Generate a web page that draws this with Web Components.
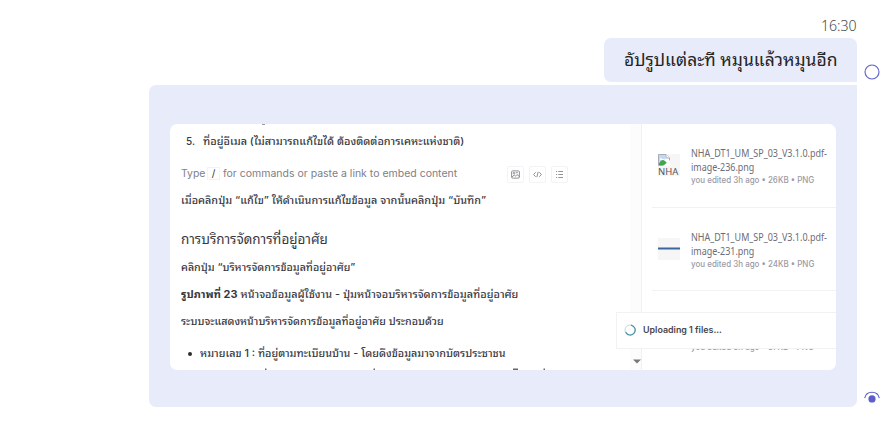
<!DOCTYPE html>
<html lang="th"><head><meta charset="utf-8"><title>Chat</title>
<style>
html,body{margin:0;width:893px;height:433px;overflow:hidden;background:#fff;font-family:"Noto Sans","Noto Sans Thai Looped",Loma,Waree,"Noto Sans Thai","Liberation Sans",sans-serif}
</style></head><body>
<chat-thread></chat-thread>
<script>
const define=(name,html,init)=>customElements.define(name,class extends HTMLElement{
  connectedCallback(){
    if(!this.shadowRoot)this.attachShadow({mode:"open"}).innerHTML=html;
    if(init)init(this,this.shadowRoot);
  }
});

/* One line of text, stretched horizontally to the width given in its w attribute. */
define("fit-line",`<style>
:host{display:block;height:20px;line-height:20px;white-space:nowrap;flex:none}
span{display:inline-block;transform-origin:0 50%;white-space:nowrap}
</style><span><slot></slot></span>`,(el,root)=>{
  const w=+el.getAttribute("w"),s=root.querySelector("span");
  el.style.width=w+"px";
  requestAnimationFrame(()=>{const n=s.offsetWidth;if(n)s.style.transform="scaleX("+w/n+")"});
});

define("tool-button",`<style>
:host{display:flex;box-sizing:border-box;width:17px;height:17px;border:1px solid #f3f3f5;border-radius:2px;align-items:center;justify-content:center;color:#85858b}
</style><slot></slot>`);

define("file-item",`<style>
:host{display:flex;box-sizing:border-box;height:83px;margin-left:10px;padding:19px 0 0 6px;border-bottom:1px solid #f2f2f5}
.thumb{width:22px;height:22px;margin-top:11px;background:#f6f6f7;flex:none;overflow:hidden}
.meta{margin-left:11px;display:flex;flex-direction:column;color:#6c6c76;font-size:10.5px}
.name{margin-bottom:-6px}
.info{color:#9b9ba6;font:500 8.5px/20px Inter,sans-serif}
</style><div class="thumb"><slot name="thumb"></slot></div>
<div class="meta"><fit-line class="name" w="136"><slot name="a"></slot></fit-line><fit-line w="63"><slot name="b"></slot></fit-line><fit-line class="info" style="margin-top:-7px" w="123"><slot name="info"></slot></fit-line></div>`);

define("broken-image",`<style>
:host{display:block;width:22px;height:22px}
svg{display:block}
fit-line{height:11px;line-height:11px;font-size:9px;color:#55555a}
</style><svg width="12" height="12" viewBox="0 0 12 12"><path d="M.5 .5H8L11.5 4V11.5H.5Z" fill="#fff" stroke="#a9adb5"/><path d="M1 1H7.5V5L1 8Z" fill="#c4d8f4"/><path d="M2 5q1-2 2 0h2v1H2Z" fill="#fff"/><path d="M1 11V9q3-5 6-2l4 4Z" fill="#43a64c"/><path d="M5 12L12 6V12Z" fill="#fff"/><path d="M8 .5V4H11.5" fill="#fff" stroke="#a9adb5"/></svg><fit-line w="20">NHA</fit-line>`);

define("doc-pane",`<style>
:host{display:flex;flex-direction:column;box-sizing:border-box;width:460px;height:246px;padding:7px 0 0 11px;font-family:Inter,"Noto Sans Thai Looped",Loma,Waree,"Noto Sans Thai","Noto Sans",sans-serif;font-size:10px;font-weight:500;color:#38383e;overflow:hidden;flex:none;position:relative}
.row{display:flex;height:20px;flex:none}
.cmd{margin-top:13px;color:#808086;font-family:Inter,sans-serif;font-weight:400}
.cmd fit-line{margin-top:-1px}
kbd{font:10px/11px Inter,sans-serif;color:#333;width:13px;height:13px;text-align:center;box-sizing:border-box;border:1px solid #f3f3f5;margin:3px 3px 0 2px}
.tools{display:flex;gap:5px;margin:2px 0 0 50px}
h3{margin:19px 0 0;font-weight:400;font-size:13.5px}
b{font-weight:700}
.dot{width:4px;height:4px;border-radius:50%;background:#2d2d32;margin:9px 8px 0 7px}
.cut{display:block;margin-top:4px;flex:none}
.top{position:absolute;left:92px;top:0}
</style>
<svg class="top" width="4" height="2"><path d="M0 .5H3" stroke="#99999e"/></svg>
<div class="row"><fit-line w="9" style="margin:0 8px 0 5px">5.</fit-line><fit-line w="261">ที่อยู่อีเมล (ไม่สามารถแก้ไขได้ ต้องติดต่อการเคหะแห่งชาติ)</fit-line></div>
<div class="row cmd"><fit-line w="24">Type</fit-line><kbd>/</kbd><fit-line w="234">for commands or paste a link to embed content</fit-line>
<div class="tools">
<tool-button><svg width="9" height="9" viewBox="0 0 9 9" fill="none" stroke="currentColor" stroke-width=".9"><rect x=".6" y=".9" width="7.8" height="7.2" rx="1"/><circle cx="3" cy="3.2" r=".8"/><path d="M1 7l2.2-2 1.4 1.2L6 4.5l2.3 2M4.8 2.7h2"/></svg></tool-button>
<tool-button><svg width="9" height="9" viewBox="0 0 9 9" fill="none" stroke="currentColor" stroke-width=".9"><path d="M2.7 2.2L.6 4.5l2.1 2.3M6.3 2.2l2.1 2.3-2.1 2.3M5.2 1.8L3.8 7.2"/></svg></tool-button>
<tool-button><svg width="9" height="9" viewBox="0 0 9 9" fill="none" stroke="currentColor" stroke-width=".9"><path d="M1 1.5h1.1M1 4.5h1.1M1 7.5h1.1M3.3 1.5H8M3.3 4.5H8M3.3 7.5H8"/></svg></tool-button>
</div></div>
<fit-line w="305" style="margin-top:6px">เมื่อคลิกปุ่ม “แก้ไข” ให้ดำเนินการแก้ไขข้อมูล จากนั้นคลิกปุ่ม “บันทึก”</fit-line>
<h3><fit-line w="147">การบริการจัดการที่อยู่อาศัย</fit-line></h3>
<fit-line w="174" style="margin-top:8px">คลิกปุ่ม “บริหารจัดการข้อมูลที่อยู่อาศัย”</fit-line>
<fit-line w="337" style="margin-top:7px"><b>รูปภาพที่ 23</b> หน้าจอข้อมูลผู้ใช้งาน - ปุ่มหน้าจอบริหารจัดการข้อมูลที่อยู่อาศัย</fit-line>
<fit-line w="263" style="margin-top:7px">ระบบจะแสดงหน้าบริหารจัดการข้อมูลที่อยู่อาศัย ประกอบด้วย</fit-line>
<div class="row" style="margin-top:12px"><i class="dot"></i><fit-line w="305">หมายเลข 1 : ที่อยู่ตามทะเบียนบ้าน - โดยดึงข้อมูลมาจากบัตรประชาชน</fit-line></div>
<svg class="cut" width="400" height="3" viewBox="0 0 400 3"><path d="M84 2.2h1.5M192.5 2.2h1.5M332 2.2h5M362.5 2.2h1.5" stroke="#66666b" stroke-width="1.6"/></svg>`);

define("scroll-track",`<style>
:host{display:flex;box-sizing:border-box;width:12px;height:246px;flex:none;background:#fcfcfc;border-right:1px solid #f1f1f3;align-items:flex-end;padding:0 0 6px 3px}
svg{flex:none}
</style><svg width="8" height="5" viewBox="0 0 8 5"><path d="M0 .5H8L4 4.5Z" fill="#78787c"/></svg>`);

define("file-list",`<style>
:host{display:block;flex:1;min-width:0;height:246px;overflow:hidden}
</style>
<file-item style="height:84px"><broken-image slot="thumb"></broken-image><span slot="a">NHA_DT1_UM_SP_03_V3.1.0.pdf-</span><span slot="b">image-236.png</span><span slot="info">you edited 3h ago • 26KB • PNG</span></file-item>
<file-item><svg slot="thumb" width="22" height="22" style="display:block"><path d="M0 10.5H22" stroke="#3c659f" stroke-width="2"/></svg><span slot="a">NHA_DT1_UM_SP_03_V3.1.0.pdf-</span><span slot="b">image-231.png</span><span slot="info">you edited 3h ago • 24KB • PNG</span></file-item>
<file-item><svg slot="thumb" width="22" height="22"></svg><span slot="info">you edited 3h ago • 37KB • PNG</span></file-item>`);

define("upload-toast",`<style>
:host{position:absolute;left:446px;top:188px;width:220px;height:37px;box-sizing:border-box;border:1px solid #f2f2f4;border-right:0;background:#fff;display:flex;align-items:center;padding-left:7px;font:600 9px Inter,sans-serif;color:#46464c}
svg{margin:-2px 7px 0 0}
</style><svg width="12" height="12" viewBox="0 0 12 12" fill="none"><circle cx="6" cy="6" r="5" stroke="#bfd9e4"/><path d="M7 1.1A5 5 0 1 1 1.6 8" stroke="#4d94ad" stroke-width="1.2"/></svg><fit-line w="79" style="margin-top:-2px">Uploading 1 files...</fit-line>`);

define("screen-capture",`<style>
:host{display:flex;position:relative;width:666px;height:246px;margin-left:1px;border-radius:7px;background:#fff;overflow:hidden}
</style><doc-pane></doc-pane><scroll-track></scroll-track><file-list></file-list><upload-toast></upload-toast>`);

define("chat-bubble",`<style>
:host{display:block;box-sizing:border-box;background:#e8ebfa;color:#242424}
</style><slot></slot>`);

define("chat-thread",`<style>
:host{display:grid;grid-template-columns:857px 36px;grid-template-rows:38px 44px 3px 322px;width:893px}
.time{justify-self:end;padding-top:15px;font-size:14.5px;font-weight:300;color:#484848}
.msg{justify-self:end;width:253px;height:44px;padding:12px 0 0 20px;border-radius:7px 7px 0 7px;grid-row:2;font-size:17px}
.pic{grid-row:4;justify-self:end;width:708px;padding:39px 20px;border-radius:7px 0 7px 7px}
.s1,.s2{grid-column:2;display:block}
.s1{grid-row:2;margin:26px 0 0 7px}
.s2{grid-row:4;align-self:end;margin:0 0 2px 7px}
</style>
<div class="time"><fit-line w="36">16:30</fit-line></div>
<chat-bubble class="msg"><fit-line w="213">อัปรูปแต่ละที หมุนแล้วหมุนอีก</fit-line></chat-bubble>
<chat-bubble class="pic"><screen-capture></screen-capture></chat-bubble>
<svg class="s1" width="16" height="16" viewBox="0 0 16 16"><circle cx="8" cy="8" r="7" fill="none" stroke="#5b5fc7" stroke-width="1.1"/></svg>
<svg class="s2" width="16" height="14" viewBox="0 0 16 14"><path d="M.7 7.2C2.3-.8 13.7-.8 15.3 7.2" fill="none" stroke="#5b5fc7" stroke-width="1.1"/><circle cx="8" cy="7.9" r="3.6" fill="#5b5fc7"/></svg>`);
</script></body></html>
